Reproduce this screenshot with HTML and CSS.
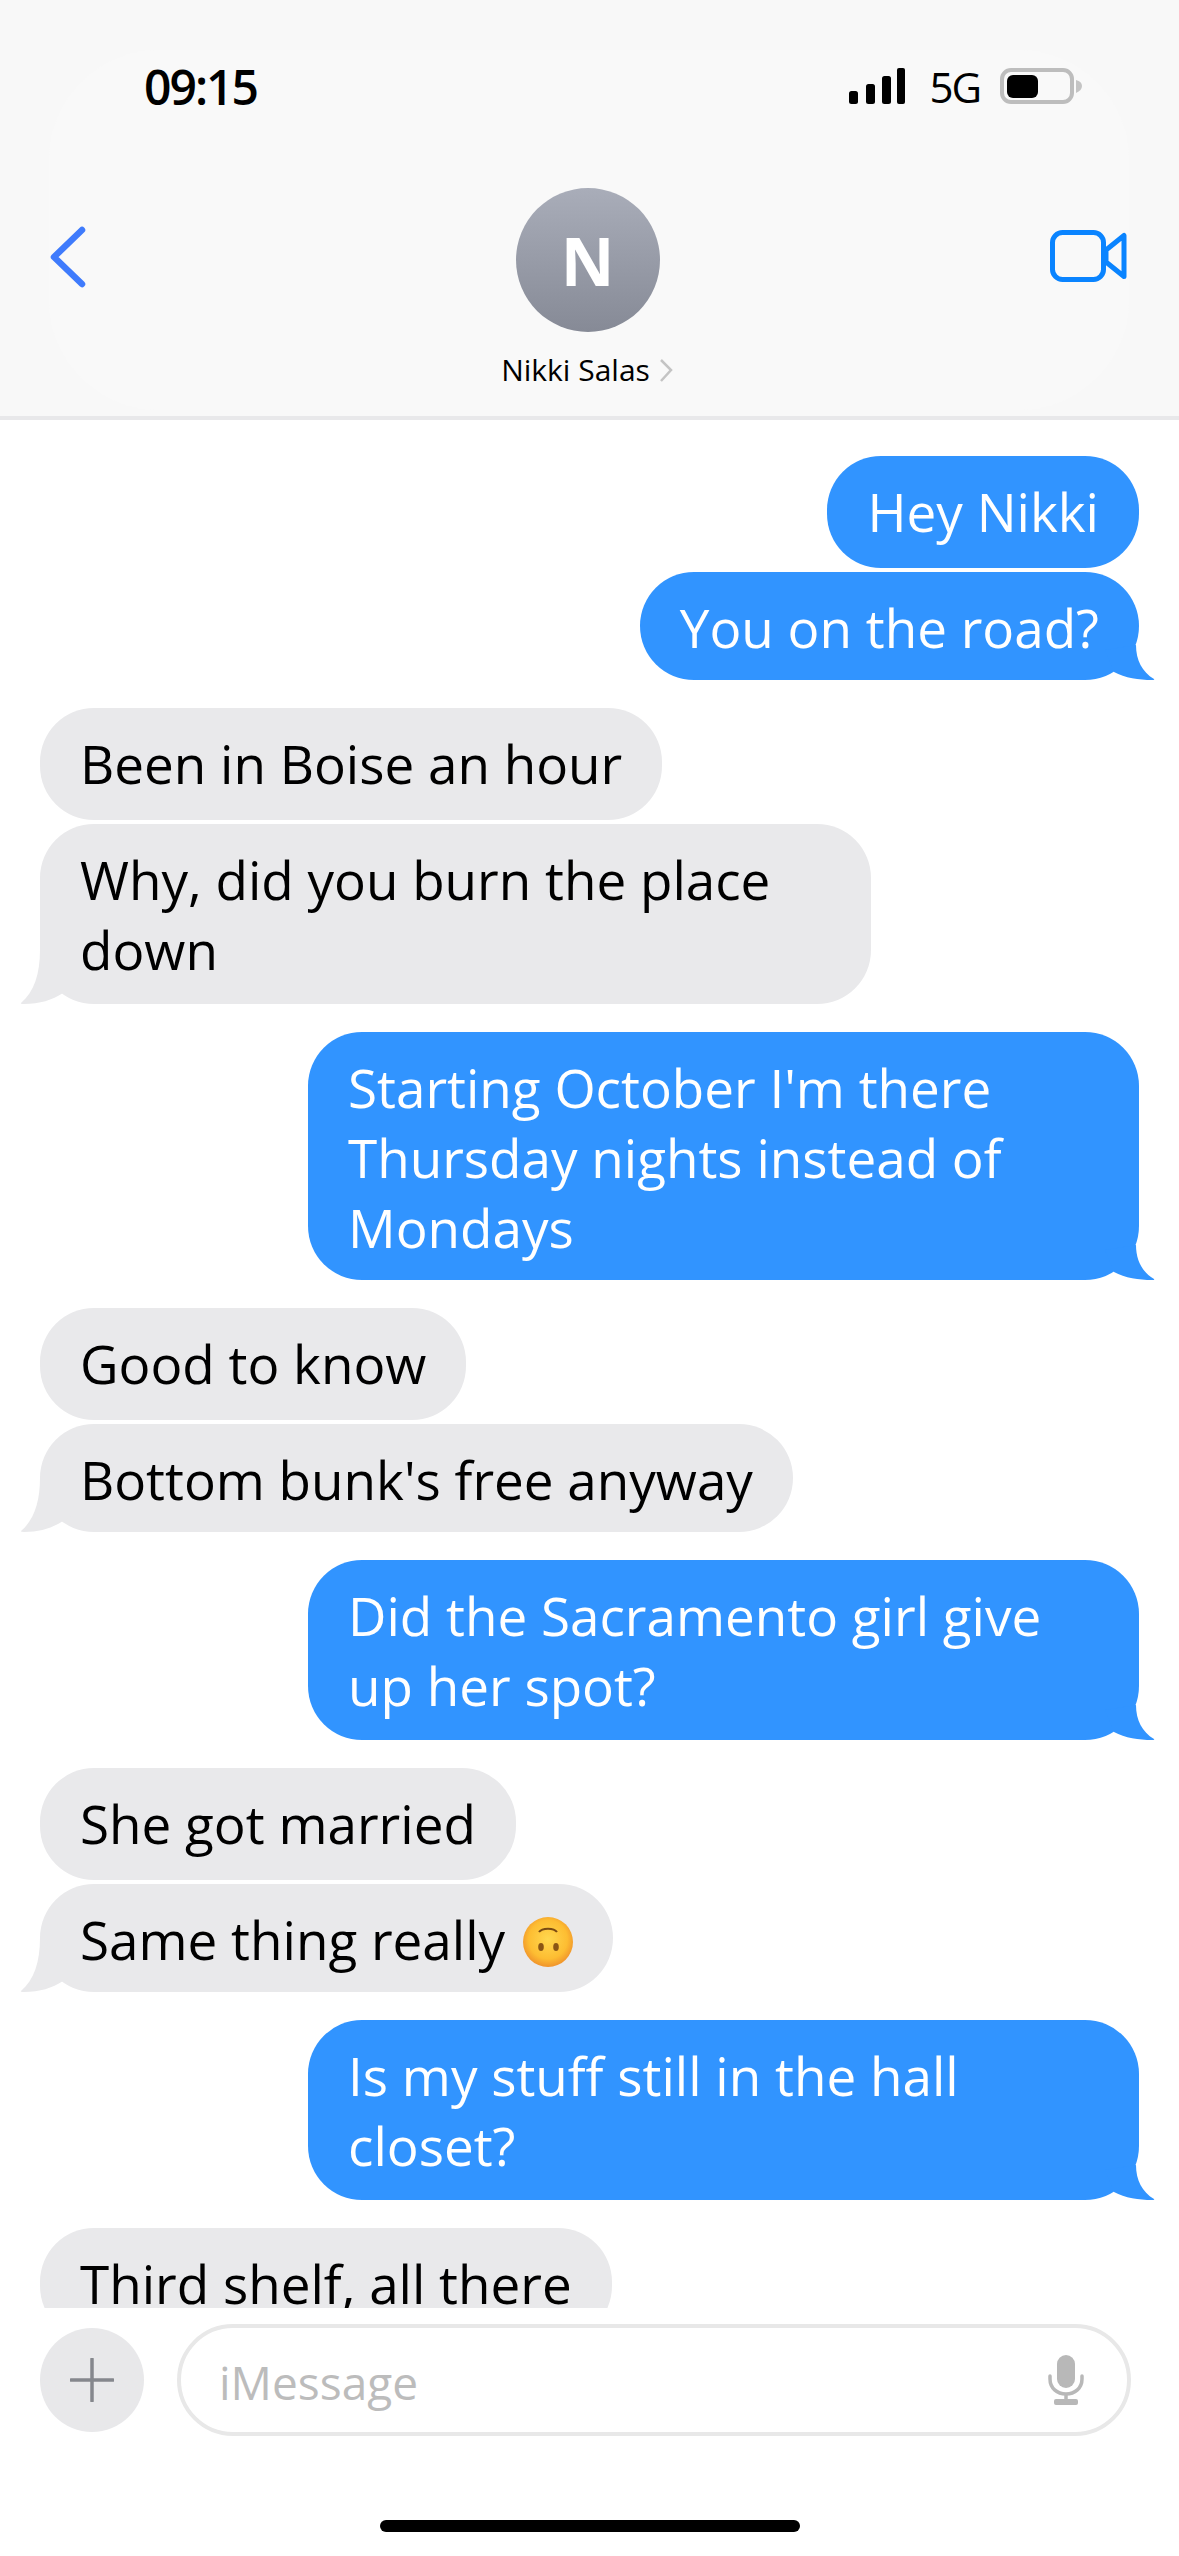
FILE: index.html
```html
<!DOCTYPE html>
<html lang="en">
<head>
  <meta charset="UTF-8">
  <title>Nikki Salas</title>
  <link rel="stylesheet" href="styles.css">
</head>
<body>
  <svg class="defs" width="0" height="0">
    <symbol id="tail-right" viewBox="0 0 60 60"><path d="M41 25C41 40 47 52 59 59Q60 60 57 60C44 60 30 58 19 52L10 30Z"/></symbol>
    <symbol id="tail-left" viewBox="0 0 60 60"><path d="M20 6C20 30 14 48 1 59Q0 60 4 60C20 60 32 56 43 49L60 40Z"/></symbol>
  </svg>

  <header class="topbar">
    <div class="topbar-glow"></div>
    <div class="status">
      <span class="time">09:15</span>
      <div class="status-right">
        <svg class="signal" width="56" height="36" viewBox="0 0 56 36"><rect x="0" y="23" width="9" height="13" rx="2.500"/><rect x="17" y="16" width="9" height="20" rx="2.500"/><rect x="33" y="8" width="9" height="28" rx="2.500"/><rect x="48" y="0" width="8" height="36" rx="2"/></svg>
        <span class="net">5G</span>
        <svg class="battery" width="82" height="36" viewBox="0 0 82 36"><rect x="2" y="2" width="70" height="32" rx="9" fill="none" stroke="#bdbdbd" stroke-width="4"/><rect x="7" y="7" width="31" height="23" rx="6" fill="#000"/><path d="M76 12C80 13 82 15 82 18S80 23 76 25Z" fill="#c4c4c4"/></svg>
      </div>
    </div>
    <div class="nav">
      <svg class="back" width="36" height="62" viewBox="0 0 36 62"><path d="M32 4L4 31L32 58" fill="none" stroke="#3f7bfc" stroke-width="6.5" stroke-linecap="round" stroke-linejoin="round"/></svg>
      <div class="contact">
        <div class="avatar">N</div>
        <div class="contact-name">Nikki Salas <svg width="15" height="24" viewBox="0 0 15 24"><path d="M2 2L12 12L2 23" fill="none" stroke="#c4c4c4" stroke-width="2.5"/></svg></div>
      </div>
      <svg class="video" width="78" height="52" viewBox="0 0 78 52"><rect x="2.5" y="2.5" width="51" height="47" rx="10" fill="none" stroke="#0a84ff" stroke-width="5"/><path d="M56 20L74 5.500V46.500L56 32Z" fill="none" stroke="#0a84ff" stroke-width="5" stroke-linejoin="round"/></svg>
    </div>
  </header>

  <main class="messages">
    <div class="bubble out first">Hey Nikki</div>
    <div class="bubble out tail">You on the road?<svg class="tail-svg"><use href="#tail-right"/></svg></div>

    <div class="bubble in first group">Been in Boise an hour</div>
    <div class="bubble in tail two">Why, did you burn the place down<svg class="tail-svg"><use href="#tail-left"/></svg></div>

    <div class="bubble out tail group">Starting October I'm there Thursday nights instead of Mondays<svg class="tail-svg"><use href="#tail-right"/></svg></div>

    <div class="bubble in first group">Good to know</div>
    <div class="bubble in tail">Bottom bunk's free anyway<svg class="tail-svg"><use href="#tail-left"/></svg></div>

    <div class="bubble out tail two group">Did the Sacramento girl give up her spot?<svg class="tail-svg"><use href="#tail-right"/></svg></div>

    <div class="bubble in first group">She got married</div>
    <div class="bubble in tail">Same thing really
      <svg class="emoji" width="50" height="50" viewBox="0 0 50 50">
        <defs><radialGradient id="face" cx="50%" cy="45%" r="55%"><stop offset="0" stop-color="#ffd84f"/><stop offset=".7" stop-color="#fdbd32"/><stop offset="1" stop-color="#f0932b"/></radialGradient></defs>
        <circle cx="25" cy="25" r="25" fill="url(#face)"/>
        <path d="M16 15C19 10.500 31 10.500 34 15" fill="none" stroke="#7a4a12" stroke-width="2"/>
        <ellipse cx="18" cy="30" rx="2.800" ry="4" fill="#8a5514"/>
        <ellipse cx="33" cy="30" rx="2.800" ry="4" fill="#8a5514"/>
      </svg>
      <svg class="tail-svg"><use href="#tail-left"/></svg></div>

    <div class="bubble out tail two group">Is my stuff still in the hall closet?<svg class="tail-svg"><use href="#tail-right"/></svg></div>

    <div class="bubble in first group">Third shelf, all there</div>
  </main>

  <footer class="composer">
    <div class="plus"><svg width="44" height="44" viewBox="0 0 44 44"><path d="M22 1V43M1 22H43" stroke="#85878d" stroke-width="3.500" stroke-linecap="round"/></svg></div>
    <div class="input">
      <span class="placeholder">iMessage</span>
      <svg width="36" height="50" viewBox="0 0 36 50"><rect x="9" y="0" width="18" height="33" rx="9" fill="#b8b8b8"/><path d="M2 21V24C2 33 9 39 18 39S34 33 34 24V21" fill="none" stroke="#b8b8b8" stroke-width="3.500" stroke-linecap="round"/><path d="M18 39V46" stroke="#b8b8b8" stroke-width="3.500"/><rect x="6" y="44" width="24" height="6" rx="2" fill="#b8b8b8"/></svg>
    </div>
  </footer>
  <div class="home"><div class="home-bar"></div></div>
</body>
</html>
```
FILE: styles.css
```css
* {
  box-sizing: border-box;
}
html, body {
  margin: 0;
  width: 1179px;
  height: 2556px;
  overflow: hidden;
}
body {
  display: flex;
  flex-direction: column;
  background: #fff;
  font-family: "Open Sans", "Noto Sans", sans-serif;
  color: #000;
}
.defs {
  position: absolute;
}

/* top bar */
.topbar {
  position: relative;
  height: 420px;
  flex: none;
  background: #f8f8f8;
  border-bottom: 4px solid #e8e8ea;
}
.topbar-glow {
  position: absolute;
  left: 49px;
  right: 50px;
  top: 50px;
  bottom: 6px;
  background: #f9f9f9;
  border-radius: 110px;
}
.status {
  position: relative;
  display: flex;
  justify-content: space-between;
  align-items: center;
  height: 36px;
  margin-top: 68px;
  padding: 0 97px 0 144px;
}
.status-right {
  display: flex;
  align-items: center;
  gap: 24px;
}
.status-right .battery {
  margin-left: -4px;
}
.time {
  font-size: 48px;
  font-weight: 600;
  letter-spacing: -2px;
}
.net {
  font-size: 42px;
  font-weight: 500;
  letter-spacing: -2px;
}
.nav {
  position: relative;
  display: flex;
  justify-content: space-between;
  padding: 0 51px 0 50px;
}
.back {
  margin-top: 122px;
}
.video {
  margin-top: 126px;
}
.contact {
  display: flex;
  flex-direction: column;
  align-items: center;
  margin-top: 84px;
  margin-left: 39px;
}
.avatar {
  width: 144px;
  height: 144px;
  border-radius: 50%;
  background: linear-gradient(#a9adb9, #868a96);
  color: #fff;
  font-size: 66px;
  font-weight: 700;
  line-height: 144px;
  text-align: center;
}
.contact-name {
  display: flex;
  align-items: center;
  gap: 9px;
  margin-top: 18px;
  font-size: 30px;
  line-height: 40px;
  white-space: nowrap;
}

/* messages */
.messages {
  flex: none;
  height: 1888px;
  overflow: hidden;
  display: flex;
  flex-direction: column;
  gap: 4px;
  padding: 36px 40px 0;
}
.bubble {
  position: relative;
  flex: none;
  max-width: 831px;
  padding: 21px 40px 17px;
  border-radius: 54px;
  font-size: 53px;
  line-height: 70px;
}
.bubble.first {
  padding-top: 21px;
  padding-bottom: 21px;
}
.bubble.two {
  padding-top: 21px;
  padding-bottom: 19px;
}
.bubble.group {
  margin-top: 24px;
}
.out {
  align-self: flex-end;
  background: #3194ff;
  color: #fff;
  fill: #3194ff;
}
.in {
  align-self: flex-start;
  background: #e9e9eb;
  color: #000;
  fill: #e9e9eb;
}
.tail-svg {
  position: absolute;
  bottom: 0;
  width: 60px;
  height: 60px;
}
.out .tail-svg {
  right: -16px;
}
.in .tail-svg {
  left: -20px;
}
.emoji {
  margin-left: 4px;
  vertical-align: -7px;
}

/* composer */
.composer {
  flex: none;
  display: flex;
  align-items: center;
  gap: 33px;
  height: 128px;
  padding: 16px 48px 0 40px;
}
.plus {
  flex: none;
  display: flex;
  align-items: center;
  justify-content: center;
  width: 104px;
  height: 104px;
  border-radius: 50%;
  background: #e8e8ea;
}
.input {
  flex: 1;
  display: flex;
  align-items: center;
  justify-content: space-between;
  height: 112px;
  padding: 0 43px 0 38px;
  border: 4px solid #e8e8e8;
  border-radius: 56px;
}
.placeholder {
  margin-top: 4px;
  font-size: 46px;
  color: #bcbcbc;
}
.home {
  flex: 1;
  display: flex;
  justify-content: center;
  padding-top: 84px;
}
.home-bar {
  width: 420px;
  height: 12px;
  border-radius: 6px;
  background: #000;
}
```
